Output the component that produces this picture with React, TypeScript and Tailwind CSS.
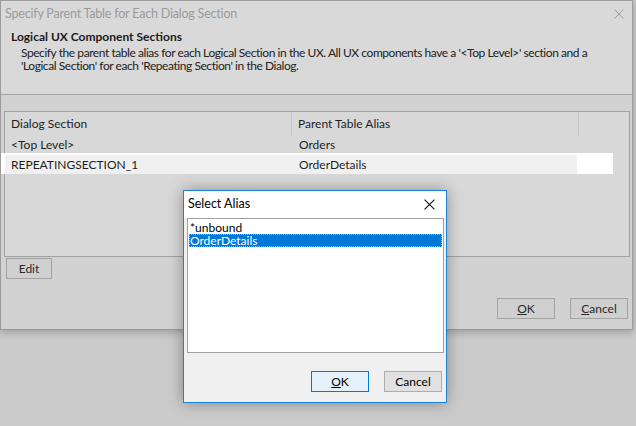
import React from "react";

const font = { fontFamily: "Lato, 'Noto Sans', sans-serif" };

function CloseIcon({ color, size }: { color: string; size: number }) {
  return (
    <svg width={size} height={size} viewBox="0 0 10 10">
      <path d="M0.5 0.5 L9.5 9.5 M9.5 0.5 L0.5 9.5" stroke={color} strokeWidth="1" fill="none" />
    </svg>
  );
}

function MainDialog() {
  return (
    <div className="w-[633px] h-[330px] border border-[#9c9c9c] bg-[#d2d2d2] shadow-[0_2px_8px_rgba(0,0,0,0.25)] flex flex-col">
      {/* title + section header */}
      <div className="h-[94px] shrink-0 bg-[#d9d9d9] border-b border-[#a3a3a3] flex flex-col">
        <div className="h-[26px] flex items-center justify-between pl-[4px] pr-[8px]">
          <span className="text-[12.5px] text-[#9b9b9b] tracking-[-0.2px]">Specify Parent Table for Each Dialog Section</span>
          <CloseIcon color="#9a9a9a" size={10} />
        </div>
        <div className="pl-[10px] pt-[1px] text-[12px] font-bold text-[#1b1b1b] leading-[18px]">Logical UX Component Sections</div>
        <div className="pl-[20px] text-[12px] text-[#222] whitespace-nowrap tracking-[-0.44px]">
          <div className="h-[13px] leading-[13px]">Specify the parent table alias for each Logical Section in the UX. All UX components have a '&lt;Top Level&gt;' section and a</div>
          <div className="h-[13px] leading-[13px]">'Logical Section' for each 'Repeating Section' in the Dialog.</div>
        </div>
      </div>

      <div className="flex-1 flex flex-col">
        {/* list view */}
        <div className="mt-[16px] ml-[3px] w-[626px] h-[146px] border border-[#a3a3a3] bg-[#d8d8d8] text-[12px] text-[#1e1e1e]">
          <div className="h-[24px] flex items-center">
            <div className="w-[287px] h-full flex items-center pl-[6px] border-r border-[#c4c4c4]">Dialog Section</div>
            <div className="w-[287px] h-full flex items-center pl-[6px] border-r border-[#c4c4c4]">Parent Table Alias</div>
          </div>
          <div className="h-[17px] flex items-end leading-[16px]">
            <div className="w-[288px] pl-[6px]">&lt;Top Level&gt;</div>
            <div className="pl-[6px]">Orders</div>
          </div>
          <div className="-ml-[4px] w-[612px] h-[21px] bg-white pt-[2px] pl-[4px]">
            <div className="w-[572px] h-[19px] bg-[#f0f0f0] flex items-center">
              <div className="w-[288px] pl-[6px]">REPEATINGSECTION_1</div>
              <div className="pl-[6px]">OrderDetails</div>
            </div>
          </div>
        </div>

        <div className="flex ml-[5px] mt-[1px]">
          <button className="w-[46px] h-[21px] border border-[#a3a3a3] bg-[#d0d0d0] text-[12px] text-[#2a2a2a]">Edit</button>
        </div>

        <div className="flex justify-end gap-[15px] pr-[4px] mt-[19px]">
          <button className="w-[58px] h-[21px] border border-[#a3a3a3] bg-[#cfcfcf] text-[12px] text-[#2a2a2a]">
            <span className="underline">O</span>K
          </button>
          <button className="w-[58px] h-[21px] border border-[#a3a3a3] bg-[#cfcfcf] text-[12px] text-[#2a2a2a]">
            <span className="underline">C</span>ancel
          </button>
        </div>
      </div>
    </div>
  );
}

function SelectAlias() {
  return (
    <div className="absolute left-[183px] top-[190px] w-[264px] h-[213px] border border-[#1883d7] bg-[#f0f0f0] shadow-[0_0_14px_rgba(0,0,0,0.35)] flex flex-col">
      <div className="h-[27px] bg-white flex items-center justify-between pl-[4px] pr-[11px] shrink-0">
        <span className="text-[12.5px] text-black">Select Alias</span>
        <CloseIcon color="#111" size={11} />
      </div>
      <div className="mx-[3px] w-[257px] h-[135px] border border-[#a0a0a0] bg-white pt-[2px] px-[1px] text-[12px]">
        <div className="h-[13px] leading-[13px] overflow-hidden pl-[1px] text-black">*unbound</div>
        <div className="h-[13px] leading-[13px] overflow-hidden pl-[1px] bg-[#0078d7] text-white outline outline-1 outline-dotted outline-[#f0a040] -outline-offset-1">OrderDetails</div>
      </div>
      <div className="flex justify-end gap-[15px] pr-[4px] mt-[18px]">
        <button className="w-[58px] h-[21px] border border-[#0078d7] bg-[#e5f1fb] text-[12px] text-black">
          <span className="underline">O</span>K
        </button>
        <button className="w-[58px] h-[21px] border border-[#adadad] bg-[#e1e1e1] text-[12px] text-black">Cancel</button>
      </div>
    </div>
  );
}

export default function App() {
  return (
    <div className="relative w-[636px] h-[426px] bg-[#cbcbcb] overflow-hidden" style={font}>
      <MainDialog />
      <SelectAlias />
    </div>
  );
}
